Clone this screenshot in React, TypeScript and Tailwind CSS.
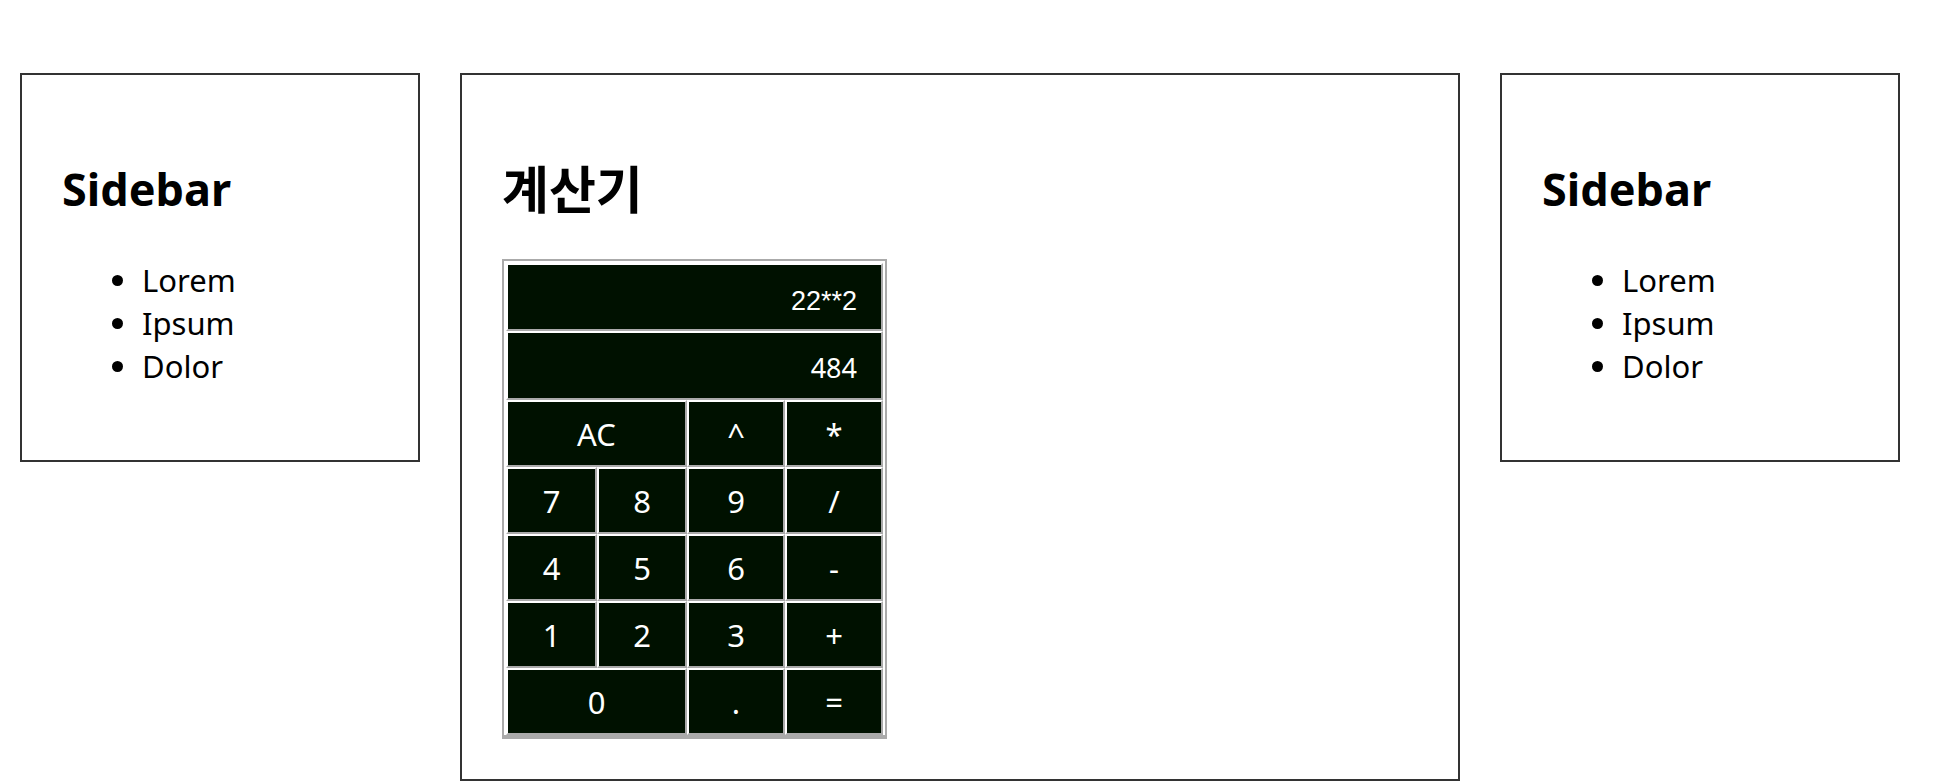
import React from "react";

const cell =
  "border-2 border-t-white border-l-white border-r-[#aaaaaa] border-b-[#aaaaaa] bg-[#001100] text-white";

function Sidebar() {
  return (
    <div className="w-[400px] shrink-0 border-2 border-[#333333] pl-[40px] pr-[40px] pt-[86px] pb-[72px]">
      <h2 className="text-[45px] leading-[56px] font-bold text-black mb-[42px]">Sidebar</h2>
      <ul className="pl-[50px] text-[31px] leading-[43px] text-black">
        {["Lorem", "Ipsum", "Dolor"].map((t) => (
          <li key={t} className="flex items-center">
            <span className="w-[11px] h-[11px] rounded-full bg-black shrink-0" />
            <span className="ml-[19px]">{t}</span>
          </li>
        ))}
      </ul>
    </div>
  );
}

function Btn({ label, span = 1 }: { label: string; span?: number }) {
  return (
    <div
      className={
        cell +
        " flex items-center justify-center text-[31px] leading-[42px] " +
        (span === 2 ? "col-span-2" : "")
      }
    >
      {label}
    </div>
  );
}

function Calculator() {
  return (
    <div className="w-[385px] border-2 border-b-4 border-[#aaaaaa] pt-[2px] px-[2px] pb-0">
      <div className="grid grid-cols-[91px_90px_98px_98px] grid-rows-[68px_69px_67px_67px_67px_67px_67px]">
        <div
          className={
            cell +
            " col-span-4 flex items-center justify-end pr-[24px] pt-[7px] text-[27px] leading-[30px]"
          }
          style={{ fontFamily: '"Liberation Sans", Arial, sans-serif' }}
        >
          22**2
        </div>
        <div className={cell + " col-span-4 flex items-center justify-end pr-[24px] pt-[3px] text-[27px] leading-[37px]"}>
          484
        </div>
        <Btn label="AC" span={2} />
        <Btn label="^" />
        <Btn label="*" />
        <Btn label="7" />
        <Btn label="8" />
        <Btn label="9" />
        <Btn label="/" />
        <Btn label="4" />
        <Btn label="5" />
        <Btn label="6" />
        <Btn label="-" />
        <Btn label="1" />
        <Btn label="2" />
        <Btn label="3" />
        <Btn label="+" />
        <Btn label="0" span={2} />
        <Btn label="." />
        <Btn label="=" />
      </div>
    </div>
  );
}

export default function App() {
  return (
    <div
      className="min-h-screen bg-white flex items-start gap-[40px] pl-[20px] pt-[73px]"
      style={{ fontFamily: '"Noto Sans", "Noto Sans CJK KR", sans-serif' }}
    >
      <Sidebar />
      <div className="w-[1000px] shrink-0 border-2 border-[#333333] px-[40px] pt-[86px] pb-[40px]">
        <h2 className="text-[51px] leading-[56px] font-bold text-black mb-[42px]">계산기</h2>
        <Calculator />
      </div>
      <Sidebar />
    </div>
  );
}
